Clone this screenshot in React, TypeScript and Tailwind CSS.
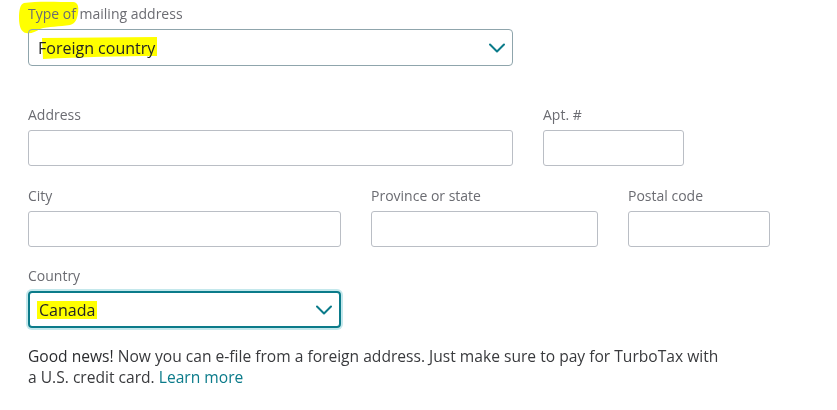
import React from "react";

const font = { fontFamily: '"Open Sans", "Noto Sans", Arial, sans-serif' };

function Chevron() {
  return (
    <svg width="16" height="10" viewBox="0 0 16 10" fill="none" className="shrink-0">
      <path d="M1 1.5 L8 8.5 L15 1.5" stroke="#0b7b8a" strokeWidth="2" strokeLinecap="round" strokeLinejoin="round" />
    </svg>
  );
}

function Label({ children }: { children: React.ReactNode }) {
  return <div className="text-[14px] leading-[20px] text-[#6b6c72] mb-[5px]">{children}</div>;
}

function Input({ w }: { w: string }) {
  return <div className={`${w} h-[36px] rounded-[3px] border border-[#babec5] bg-white`} />;
}

export default function App() {
  return (
    <div className="w-[837px] h-[410px] bg-white relative overflow-hidden text-[#393a3d]" style={font}>
      <div className="pl-[28px] pt-[4px]">
        {/* Type of mailing address */}
        <div className="relative">
          <svg className="absolute left-[-10px] top-[-3px] mix-blend-multiply" width="62" height="34" viewBox="0 0 62 34">
            <path
              d="M6 2 C18 0 40 1 55 1 C60 1 61 6 60 12 C59 18 58 22 52 24 C42 26 30 25 22 28 C17 31 13 33 8 32 C3 31 1 25 1 17 C1 10 2 3 6 2 Z"
              fill="#ffff00"
            />
          </svg>
          <div className="relative">
            <Label>Type of mailing address</Label>
          </div>
        </div>
        <div className="relative w-[485px] h-[37px] rounded-[4px] border border-[#8fa5ac] flex items-center justify-between pl-[9px] pr-[7px]">
          <span className="relative text-[16px] leading-[20px] text-[#232426]">
            <svg className="absolute left-[3px] top-[-2px] mix-blend-multiply" width="117" height="23" viewBox="0 0 117 23">
              <path d="M1 2 L116 1 L116 20 C80 20 40 21 2 23 Z" fill="#ffff00" />
            </svg>
            <span className="relative">Foreign country</span>
          </span>
          <Chevron />
        </div>

        {/* Address row */}
        <div className="flex gap-[30px] mt-[39px]">
          <div>
            <Label>Address</Label>
            <Input w="w-[485px]" />
          </div>
          <div>
            <Label>Apt. #</Label>
            <Input w="w-[141px]" />
          </div>
        </div>

        {/* City row */}
        <div className="flex gap-[30px] mt-[20px]">
          <div>
            <Label>City</Label>
            <Input w="w-[313px]" />
          </div>
          <div>
            <Label>Province or state</Label>
            <Input w="w-[227px]" />
          </div>
          <div>
            <Label>Postal code</Label>
            <Input w="w-[142px]" />
          </div>
        </div>

        {/* Country */}
        <div className="mt-[19px]">
          <Label>Country</Label>
          <div className="w-[313px] h-[37px] rounded-[4px] border-2 border-[#0b7b8a] shadow-[0_0_0_2px_#c4e8ec] flex items-center justify-between pl-[7px] pr-[7px]">
            <span className="text-[16px] leading-[18px] text-[#232426] bg-[#ffff00] px-[2px]">Canada</span>
            <Chevron />
          </div>
        </div>

        {/* Good news */}
        <p className="mt-[18px] w-[697px] text-[15.6px] leading-[21px] text-[#393a3d]">
          <span className="font-medium text-[#2b2c2f]">Good news!</span> Now you can e-file from a foreign address. Just make sure to pay for TurboTax with a U.S. credit card.{" "}
          <span className="text-[#0b7b8a]">Learn more</span>
        </p>
      </div>
    </div>
  );
}
